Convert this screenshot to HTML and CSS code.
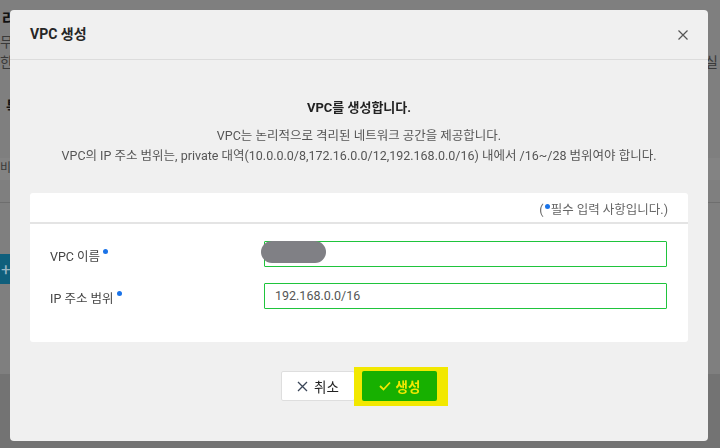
FILE: index.html
```html
<!DOCTYPE html>
<html lang="ko">
<head>
<meta charset="utf-8">
<title>VPC 생성</title>
<link rel="stylesheet" href="styles.css">
</head>
<body>
<div class="page">
  <div class="pg-title">라우팅</div>
  <div class="pg-line">무료로 제공되는 기본 기능입니다.</div>
  <div class="pg-line pg-split"><span>한 번 생성하면 변경할 수 없습니다.</span><span>실</span></div>
  <div class="pg-sub">특징</div>
  <div class="pg-row">비</div>
  <div class="pg-rule"></div>
  <div class="pg-btn">+</div>
  <div class="pg-bottom"></div>
</div>

<div class="modal">
  <div class="modal-head">
    <h1 class="modal-title">VPC 생성</h1>
    <svg class="close" width="10" height="10" viewBox="0 0 10 10"><path d="M0.5 0.5 L9.5 9.5 M9.5 0.5 L0.5 9.5" stroke="#555" stroke-width="1.2" fill="none"/></svg>
  </div>
  <div class="modal-body">
    <p class="lead">VPC를 생성합니다.</p>
    <p class="desc">VPC는 논리적으로 격리된 네트워크 공간을 제공합니다.<br>VPC의 IP 주소 범위는, private 대역(10.0.0.0/8,172.16.0.0/12,192.168.0.0/16) 내에서 /16~/28 범위여야 합니다.</p>
    <div class="card">
      <div class="card-top">(<span class="dot"></span>필수 입력 사항입니다.)</div>
      <div class="form">
        <div class="row">
          <label class="label">VPC 이름<span class="dot sup"></span></label>
          <div class="field">
            <div class="input"></div>
            <span class="blur"></span>
          </div>
        </div>
        <div class="row">
          <label class="label">IP 주소 범위<span class="dot sup"></span></label>
          <div class="field">
            <div class="input">192.168.0.0/16</div>
          </div>
        </div>
      </div>
    </div>
    <div class="actions">
      <button class="btn btn-cancel"><svg width="11" height="11" viewBox="0 0 11 11"><path d="M1 1 L10 10 M10 1 L1 10" stroke="#3a4658" stroke-width="1.3" fill="none"/></svg>취소</button>
      <button class="btn btn-ok"><svg width="12" height="10" viewBox="0 0 12 10"><path d="M1 5 L4.5 8.5 L11 1.5" stroke="#f2e800" stroke-width="1.8" fill="none"/></svg>생성</button>
    </div>
  </div>
</div>
</body>
</html>
```

FILE: styles.css
```css
* { box-sizing: border-box; }
html, body { margin: 0; padding: 0; }
body {
  width: 720px;
  height: 448px;
  overflow: hidden;
  background: #7f7f7f;
  font-family: Roboto, "Noto Sans CJK KR", sans-serif;
}
.page {
  height: 448px;
  display: flex;
  flex-direction: column;
  color: #303030;
  line-height: 1.2;
}
.pg-title {
  height: 34px;
  padding: 10px 0 0 2px;
  font-size: 15px;
  font-weight: bold;
  color: #111;
}
.pg-line {
  height: 20px;
  font-size: 14px;
  color: #3a3a3a;
}
.pg-split { display: flex; justify-content: space-between; padding-right: 2px; }
.pg-sub {
  margin-top: 24px;
  padding-left: 6px;
  font-size: 14px;
  font-weight: bold;
  color: #151515;
  height: 20px;
}
.pg-row {
  margin-top: 40px;
  height: 22px;
  background: #838383;
  font-size: 12px;
  padding: 3px 0 0 0;
  color: #3a3a3a;
}
.pg-rule {
  margin-top: 22px;
  height: 1px;
  background: #6e6e6e;
}
.pg-btn {
  margin-top: 51px;
  width: 20px;
  height: 30px;
  background: #0f5f7c;
  color: #9ab7c4;
  font-size: 17px;
  line-height: 30px;
  padding-left: 1px;
}
.pg-bottom {
  margin-top: 90px;
  flex: 1;
  background: #737373;
}

.modal {
  position: fixed;
  left: 10px;
  top: 10px;
  width: 698px;
  height: 431px;
  background: #f0f0f0;
  border-radius: 4px;
  display: flex;
  flex-direction: column;
}
.modal-head {
  height: 50px;
  border-bottom: 1px solid #dcdcdc;
  display: flex;
  align-items: center;
  justify-content: space-between;
  padding: 0 20px 0 20px;
}
.modal-title {
  margin: 0;
  font-size: 14px;
  font-weight: bold;
  color: #262626;
  margin-top: -4px;
}
.close { margin-top: 1px; }
.modal-body {
  padding: 39px 20px 0 20px;
  display: flex;
  flex-direction: column;
}
.lead {
  margin: 0;
  text-align: center;
  font-size: 13px;
  font-weight: bold;
  color: #222;
  line-height: 18px;
}
.desc {
  margin: 9px 0 0 0;
  text-align: center;
  font-size: 12.5px;
  color: #555;
  line-height: 20px;
}
.card {
  margin-top: 27px;
  background: #fff;
  border-radius: 3px;
  display: flex;
  flex-direction: column;
}
.card-top {
  height: 31px;
  border-bottom: 2px solid #e4e4e4;
  text-align: right;
  padding: 6px 20px 0 0;
  font-size: 12.5px;
  color: #666;
}
.dot {
  display: inline-block;
  width: 5px;
  height: 5px;
  border-radius: 50%;
  background: #1a73e8;
  vertical-align: 5px;
  margin: 0 1px 0 1px;
}
.dot.sup { vertical-align: 7px; margin-left: 3px; }
.form {
  padding: 17px 21px 33px 20px;
  display: flex;
  flex-direction: column;
  gap: 16px;
}
.row {
  display: flex;
  align-items: center;
  height: 26px;
}
.label {
  width: 214px;
  font-size: 12.5px;
  color: #444;
  padding-top: 2px;
}
.field {
  position: relative;
  flex: 1;
}
.input {
  height: 26px;
  border: 1px solid #1fc43c;
  border-radius: 1px;
  background: #fff;
  font-size: 12.5px;
  color: #555;
  padding: 0 10px;
  line-height: 24px;
}
.blur {
  position: absolute;
  left: -3px;
  top: 0;
  width: 65px;
  height: 22px;
  border-radius: 11px;
  background: #808085;
}
.actions {
  margin-top: 29px;
  display: flex;
  justify-content: center;
  gap: 7px;
}
.btn {
  font-family: Roboto, "Noto Sans CJK KR", sans-serif;
  font-size: 13.5px;
  display: flex;
  align-items: center;
  justify-content: center;
  gap: 6px;
  border-radius: 2px;
  cursor: pointer;
}
.btn-cancel {
  width: 74px;
  height: 30px;
  background: #fff;
  border: 1px solid #dedede;
  color: #222;
}
.btn-ok {
  position: relative;
  z-index: 0;
  width: 75px;
  height: 30px;
  background: #17b000;
  border: none;
  color: #f2e800;
  font-weight: bold;
  gap: 5px;
}
.btn-ok::before {
  content: "";
  position: absolute;
  left: -8px;
  right: -11px;
  top: -4px;
  bottom: -5px;
  background: #f2e800;
  z-index: -1;
}
.btn-ok::after {
  content: "";
  position: absolute;
  inset: 0;
  background: #17b000;
  border-radius: 2px;
  z-index: -1;
}
```
